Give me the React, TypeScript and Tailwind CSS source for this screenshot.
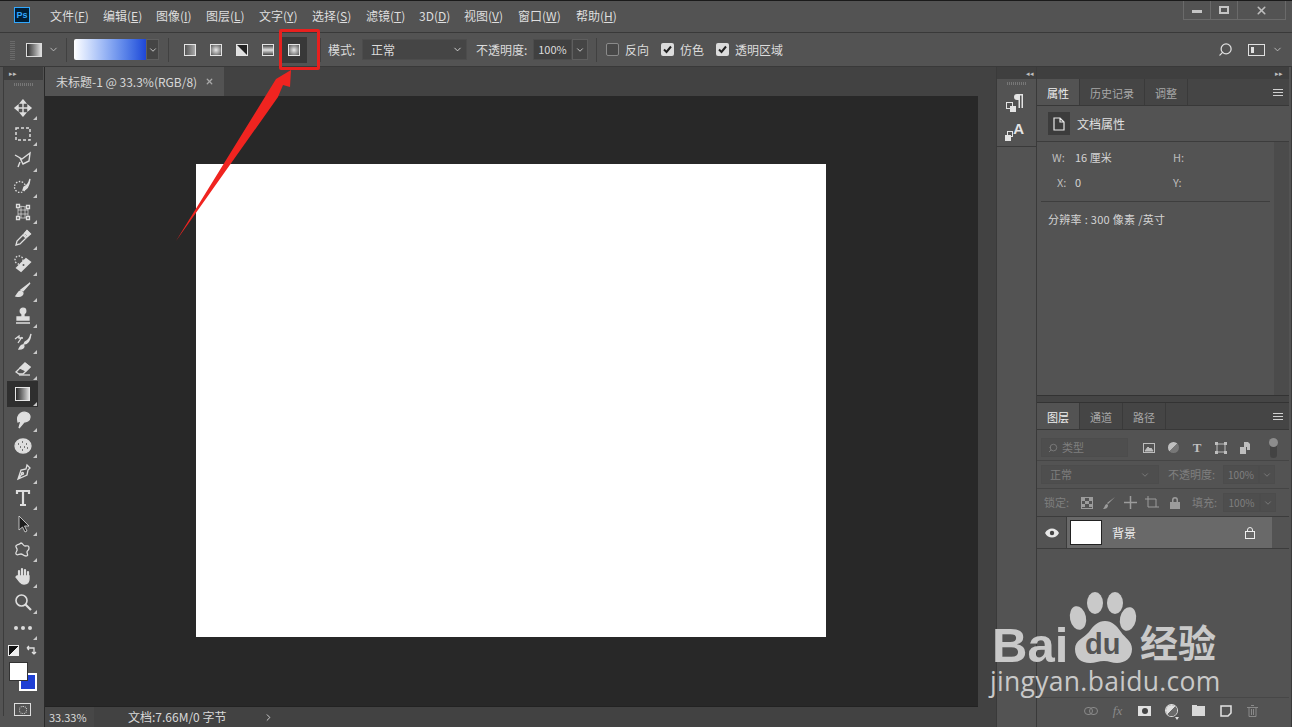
import type { ReactNode } from "react";
import { ChevronDown, ChevronRight, Search, X } from "lucide-react";

const CJK = "font-['Noto_Sans_CJK_SC','Liberation_Sans',sans-serif]";

const MENUS: { name: string; key: string; width: string }[] = [
  { name: "文件", key: "F", width: "w-[53px]" },
  { name: "编辑", key: "E", width: "w-[53px]" },
  { name: "图像", key: "I", width: "w-[50px]" },
  { name: "图层", key: "L", width: "w-[53px]" },
  { name: "文字", key: "Y", width: "w-[53px]" },
  { name: "选择", key: "S", width: "w-[54px]" },
  { name: "滤镜", key: "T", width: "w-[53px]" },
  { name: "3D", key: "D", width: "w-[45px]" },
  { name: "视图", key: "V", width: "w-[54px]" },
  { name: "窗口", key: "W", width: "w-[58px]" },
  { name: "帮助", key: "H", width: "w-[60px]" },
];

/** One of the five gradient shapes in the options bar. */
function GradientShape({ fill, selected }: { fill: string; selected?: boolean }): ReactNode {
  return (
    <div className={`flex h-[26px] w-[26px] items-center justify-center ${selected ? "bg-[#383838]" : ""}`}>
      <div className={`h-[12px] w-[12px] border border-[#e4e4e4] ${fill}`} />
    </div>
  );
}

function Svg({ children }: { children: ReactNode }): ReactNode {
  return (
    <svg width="20" height="20" viewBox="0 0 20 20" fill="none" stroke="#dedede" strokeWidth="1.3">
      {children}
    </svg>
  );
}

const TOOLS: { icon: ReactNode; active?: boolean }[] = [
  { icon: <Svg><path d="M10 2v16M2 10h16M10 2 7.500 5h5zM10 18l-2.500-3h5zM2 10l3-2.500v5zM18 10l-3-2.500v5z" fill="#dedede" strokeWidth="1.400" /></Svg> },
  { icon: <Svg><rect x="3" y="4" width="14" height="12" strokeDasharray="3 2" strokeWidth="1.500" /></Svg> },
  { icon: <Svg><path d="M2 5l7 4 8-6-1 8-6 3-3-6M7 12l-2 5" strokeWidth="1.400" /></Svg> },
  { icon: <Svg><circle cx="7" cy="11" r="5.500" strokeDasharray="1.500 1.500" /><path d="M17 3c-1 4-3 7-6 8l-1 3c3 0 6-3 7-11z" fill="#dedede" /></Svg> },
  { icon: <Svg><path d="M5 4 15 5 15 16H5zM8 4v12M12 5v11M5 8h10M5 12h10" strokeWidth="0.700" /><path d="M3.500 2.500h3v3h-3zM13.500 3.500h3v3h-3zM3.500 14.500h3v3h-3zM13.500 14.500h3v3h-3z" fill="#555" /></Svg> },
  { icon: <Svg><path d="M3 17l1-4 6-6 3 3-6 6zM11 6l3-3 3 3-3 3z" fill="none" /><path d="M12 5l2-2.500 3.500 3.500-2.500 2z" fill="#dedede" /></Svg> },
  { icon: <Svg><circle cx="6" cy="6" r="4" strokeDasharray="1.500 1.500" /><path d="M4 14l9-9 4 3-9 9z" fill="#dedede" strokeWidth="2" /><circle cx="10.500" cy="11" r="1" fill="#555" stroke="none" /></Svg> },
  { icon: <Svg><path d="M17 3 10 11l-2-1z" fill="#dedede" /><path d="M8 11c-3 0-3 3-5 5 4 1 7 0 7-3z" fill="#dedede" /></Svg> },
  { icon: <Svg><circle cx="10" cy="5" r="2.800" fill="#dedede" /><path d="M9 7h2v4H9zM4 11h12v3H4z" fill="#dedede" /><path d="M3 17h14" strokeWidth="1.500" /></Svg> },
  { icon: <Svg><path d="M2 7l4-3v2h4M5 11l4-6" /><path d="M18 2c-1 4-3 7-6 8l-1 2c3 0 6-3 7-10zM10 13c-2 0-3 2-4 4 3 0 5-1 5-3z" fill="#dedede" /></Svg> },
  { icon: <Svg><path d="M3 14l9-9 5 4-7 7H6z" /><path d="M7 10l5-5 5 4-4 4z" fill="#dedede" /><path d="M6 17h11" /></Svg> },
  { icon: <div className="h-[14px] w-[15px] border border-[#e6e6e6] bg-gradient-to-r from-[#2a2a2a] to-[#dedede]" />, active: true },
  { icon: <Svg><path d="M8 3c4-2 9 0 9 4s-4 5-6 5l-5 6 2-7-3 1c-1-4 0-7 3-9z" fill="#dedede" /></Svg> },
  { icon: <Svg><ellipse cx="10" cy="10" rx="8" ry="7" fill="#dedede" /><path d="M5 8h1M9 6h1M13 8h1M7 11h1M11 11h1M14 12h1M9 14h1" stroke="#555" /></Svg> },
  { icon: <Svg><path d="M14 3l3 3-2 2-1 5-9 4 3-9 5-1zM5 17l4-5" /><circle cx="9.500" cy="11.500" r="1" /></Svg> },
  { icon: <Svg><path d="M4 6V3h12v3M10 3v14M7 17h6" strokeWidth="2.200" /></Svg> },
  { icon: <svg width="20" height="20" viewBox="0 0 20 20"><path d="M6 2v14l3.500-3 2.500 5 2-1-2.500-5H16z" fill="#1d1d1d" stroke="#dedede" strokeWidth="0.800" /></svg> },
  { icon: <Svg><path d="M8 3c2 0 2 3 4 3s4-1 4 2-2 2-2 4 2 4-1 4-3-2-5-2-4 2-5 0 2-3 1-5-2-3 0-4 2 0 4-2z" /></Svg> },
  { icon: <Svg><path d="M6 11V5M9 10V3M12 10V4M15 11V6" strokeWidth="2.200" strokeLinecap="round" /><path d="M5 10h11v3c0 3-2 5-5 5-2 0-3-1-4-2l-4-5 1-1 2 1z" fill="#dedede" /></Svg> },
  { icon: <Svg><circle cx="8.500" cy="8.500" r="5.500" strokeWidth="1.600" /><path d="M12.500 12.500 18 18" strokeWidth="2.200" /></Svg> },
  { icon: <div className="flex gap-[3px]"><div className="h-[4px] w-[4px] rounded-full bg-[#dcdcdc]" /><div className="h-[4px] w-[4px] rounded-full bg-[#dcdcdc]" /><div className="h-[4px] w-[4px] rounded-full bg-[#dcdcdc]" /></div> },
];

/** A tool button with its small flyout mark in the corner. */
function ToolButton({ icon, active }: { icon: ReactNode; active?: boolean }): ReactNode {
  return (
    <div className={`relative flex h-[26px] w-[31px] items-center justify-center ${active ? "bg-[#2f2f2f]" : ""}`}>
      {icon}
      <div className="absolute right-[1px] bottom-[1px] h-0 w-0 border-b-[4px] border-l-[4px] border-b-[#c8c8c8] border-l-transparent" />
    </div>
  );
}

function Tab({ label, active }: { label: string; active?: boolean }): ReactNode {
  return (
    <div
      className={`flex h-full items-center border-r border-[#3a3a3a] px-[10px] pt-[2px] text-[11px] ${
        active ? "bg-[#535353] text-[#f0f0f0]" : "bg-[#454545] text-[#a8a8a8]"
      }`}
    >
      {label}
    </div>
  );
}

function PanelMenu(): ReactNode {
  return (
    <div className="mr-[6px] ml-auto flex w-[10px] flex-col gap-[2px]">
      <div className="h-px bg-[#d0d0d0]" />
      <div className="h-px bg-[#d0d0d0]" />
      <div className="h-px bg-[#d0d0d0]" />
    </div>
  );
}

function Checkbox({ checked }: { checked?: boolean }): ReactNode {
  return checked ? (
    <svg width="13" height="13" viewBox="0 0 13 13" className="shrink-0">
      <rect width="13" height="13" rx="2" fill="#dcdcdc" />
      <path d="M3 6.500 5.500 9 10 3.500" fill="none" stroke="#222" strokeWidth="2" />
    </svg>
  ) : (
    <div className="h-[13px] w-[13px] shrink-0 rounded-[2px] border border-[#8a8a8a] bg-[#484848]" />
  );
}

function Grip({ className }: { className: string }): ReactNode {
  return <div className={`bg-[repeating-linear-gradient(90deg,#777_0,#777_1px,transparent_1px,transparent_2px)] ${className}`} />;
}

/** Fixed-width slot so the icon rows keep an even pitch. */
function Slot({ width, children }: { width: string; children: ReactNode }): ReactNode {
  return <div className={`flex items-center justify-center ${width}`}>{children}</div>;
}

/** The properties panel: tabs, header row and document values. */
function PropertiesPanel(): ReactNode {
  return (
    <div className="flex h-[316px] shrink-0 flex-col">
      <div className="flex h-[27px] shrink-0 items-center border-b border-[#383838] bg-[#454545]">
        <Tab label="属性" active />
        <Tab label="历史记录" />
        <Tab label="调整" />
        <PanelMenu />
      </div>
      <div className="flex h-[36px] shrink-0 items-center gap-[7px] border-b border-[#3c3c3c] pl-[11px] text-[12px] text-[#e0e0e0]">
        <div className="flex h-[23px] w-[22px] items-center justify-center bg-[#3c3c3c]">
          <svg width="12" height="14" viewBox="0 0 12 14" fill="none" stroke="#e8e8e8" strokeWidth="1.200">
            <path d="M1 1h6l4 4v8H1zM7 1v4h4" />
          </svg>
        </div>
        文档属性
      </div>
      <div className="flex min-h-0 flex-1">
        <div className="flex-1 text-[11px] text-[#d4d4d4]">
          <div className="mt-[7px] flex h-[16px] items-center">
            <span className="w-[38px] pl-[15px] text-[#bdbdbd]">W:</span>
            <span className="w-[98px]">16 厘米</span>
            <span className="text-[#bdbdbd]">H:</span>
          </div>
          <div className="mt-[9px] flex h-[16px] items-center">
            <span className="w-[38px] pl-[20px] text-[#bdbdbd]">X:</span>
            <span className="w-[98px]">0</span>
            <span className="text-[#bdbdbd]">Y:</span>
          </div>
          <div className="mx-[4px] mt-[11px] h-px bg-[#3e3e3e]" />
          <div className="mt-[9px] pl-[11px] text-[11px] tracking-[0.300px]">分辨率 : 300 像素 /英寸</div>
        </div>
        <div className="w-[15px] bg-[#4b4b4b]" />
      </div>
    </div>
  );
}

/** The layers panel, greyed controls and the single background layer. */
function LayersPanel(): ReactNode {
  const dim = "text-[#7f7f7f]";
  const field = "flex items-center border border-[#4c4c4c] bg-[#4e4e4e]";
  return (
    <div className="flex min-h-0 flex-1 flex-col pb-[4px]">
      <div className="flex h-[27px] shrink-0 items-center border-b border-[#383838] bg-[#454545]">
        <Tab label="图层" active />
        <Tab label="通道" />
        <Tab label="路径" />
        <PanelMenu />
      </div>
      <div className="flex h-[31px] shrink-0 items-center border-b border-[#454545] pt-[5px] pl-[4px]">
        <div className={`${field} h-[19px] w-[87px] gap-[4px] pl-[6px] text-[11px] ${dim}`}>
          <Search size={10} strokeWidth={2} className="-scale-x-100" />
          类型
        </div>
        <div className="ml-[9px] flex items-center">
          <Slot width="w-[24px]">
            <svg width="12" height="10" viewBox="0 0 12 10" fill="none" stroke="#bdbdbd"><rect x="0.500" y="0.500" width="11" height="9" /><path d="M2 8l3-4 2 2 1-1 2 3z" fill="#bdbdbd" /></svg>
          </Slot>
          <Slot width="w-[24px]">
            <div className="h-[11px] w-[11px] rounded-full bg-[linear-gradient(135deg,#c0c0c0_50%,#777_50%)]" />
          </Slot>
          <Slot width="w-[24px]">
            <span className="font-['Liberation_Serif',serif] text-[13px] leading-none font-bold text-[#c0c0c0]">T</span>
          </Slot>
          <Slot width="w-[24px]">
            <svg width="12" height="12" viewBox="0 0 12 12" fill="none" stroke="#bdbdbd"><path d="M2 2h8v8H2z" /><path d="M0 0h3v3H0zM9 0h3v3H9zM0 9h3v3H0zM9 9h3v3H9z" fill="#bdbdbd" stroke="none" /></svg>
          </Slot>
          <Slot width="w-[24px]">
            <svg width="10" height="12" viewBox="0 0 10 12" fill="#bdbdbd"><path d="M4 0h4l2 2v6H7V5H4zM0 5h6v7H0z" /></svg>
          </Slot>
        </div>
        <div className="ml-[13px] flex h-[20px] w-[7px] flex-col items-center rounded-full bg-[#434343]">
          <div className="h-[9px] w-[9px] shrink-0 rounded-full bg-[#8c8c8c]" />
        </div>
      </div>
      <div className="flex h-[28px] shrink-0 items-center border-b border-[#454545] pl-[4px] text-[11px]">
        <div className={`${field} h-[19px] w-[118px] justify-between px-[8px] ${dim}`}>
          正常
          <ChevronDown size={10} />
        </div>
        <span className={`ml-[9px] w-[55px] ${dim}`}>不透明度:</span>
        <div className={`${field} h-[19px] w-[36px] justify-center text-[10px] ${dim}`}>100%</div>
        <div className={`${field} h-[19px] w-[16px] justify-center ${dim}`}><ChevronDown size={10} /></div>
      </div>
      <div className="flex h-[28px] shrink-0 items-center border-b border-[#3c3c3c] pl-[7px] text-[11px]">
        <span className={`w-[37px] ${dim}`}>锁定:</span>
        <div className="grid h-[12px] w-[12px] grid-cols-3 grid-rows-3 border border-[#9c9c9c]">
          <div className="bg-[#9c9c9c]" /><div /><div className="bg-[#9c9c9c]" />
          <div /><div className="bg-[#9c9c9c]" /><div />
          <div className="bg-[#9c9c9c]" /><div /><div className="bg-[#9c9c9c]" />
        </div>
        <svg width="14" height="14" viewBox="0 0 14 14" fill="#9c9c9c" className="ml-[9px]"><path d="M13 1 6 8l-1-1zM5 8c-2 0-2 3-4 5 3 0 5-1 5-4z" /></svg>
        <svg width="13" height="13" viewBox="0 0 13 13" fill="none" stroke="#9c9c9c" className="ml-[8px]"><path d="M6.500 0v13M0 6.500h13" strokeWidth="1.500" /></svg>
        <svg width="14" height="13" viewBox="0 0 14 13" fill="none" stroke="#9c9c9c" className="ml-[8px]"><path d="M3 0v11h11M0 3h11v8" /></svg>
        <svg width="10" height="12" viewBox="0 0 10 12" fill="#9c9c9c" className="ml-[11px]"><path d="M2 5V3a3 3 0 0 1 6 0v2h2v7H0V5zM3.500 5h3V3a1.500 1.500 0 0 0-3 0z" /></svg>
        <span className={`ml-[12px] w-[31px] shrink-0 ${dim}`}>填充:</span>
        <div className={`${field} h-[19px] w-[37px] justify-center text-[10px] ${dim}`}>100%</div>
        <div className={`${field} h-[19px] w-[16px] justify-center ${dim}`}><ChevronDown size={10} /></div>
      </div>
      <div className="flex h-[32px] shrink-0 items-center border-b border-[#3c3c3c]">
        <div className="flex h-full w-[30px] items-center justify-center border-r border-[#3c3c3c]">
          <svg width="14" height="10" viewBox="0 0 14 10"><path d="M0 5c3-6 11-6 14 0-3 6-11 6-14 0z" fill="#e8e8e8" /><circle cx="7" cy="5" r="2.200" fill="#444" /></svg>
        </div>
        <div className="flex h-full w-[205px] items-center bg-[#696969] pl-[3px] text-[12px] text-[#f0f0f0]">
          <div className="h-[25px] w-[32px] border border-[#222] bg-white" />
          <span className="ml-[10px]">背景</span>
          <svg width="10" height="12" viewBox="0 0 10 12" fill="none" stroke="#eee" className="mr-[17px] ml-auto"><rect x="0.500" y="4.500" width="9" height="7" /><path d="M2.500 4.500V3a2.500 2.500 0 0 1 5 0v1.500" /></svg>
        </div>
      </div>
      <div className="flex-1" />
      <div className="flex h-[26px] shrink-0 items-center justify-end border-t border-[#474747] pr-[23px]">
        <Slot width="w-[27px]">
          <svg width="14" height="8" viewBox="0 0 14 8" fill="none" stroke="#8a8a8a"><rect x="0.500" y="0.500" width="8" height="7" rx="3.500" /><rect x="5.500" y="0.500" width="8" height="7" rx="3.500" /></svg>
        </Slot>
        <Slot width="w-[27px]">
          <span className="font-['Liberation_Serif',serif] text-[13px] text-[#8a8a8a] italic">fx</span>
        </Slot>
        <Slot width="w-[27px]">
          <div className="flex h-[10px] w-[13px] items-center justify-center bg-[#e0e0e0]"><div className="h-[6px] w-[6px] rounded-full bg-[#444]" /></div>
        </Slot>
        <Slot width="w-[27px]">
          <div className="relative h-[11px] w-[11px] rounded-full bg-[linear-gradient(135deg,#e0e0e0_50%,#6a6a6a_50%)] ring-1 ring-[#e0e0e0]">
            <div className="absolute top-[12px] left-[9px] h-0 w-0 border-x-[2px] border-t-[3px] border-x-transparent border-t-[#e0e0e0]" />
          </div>
        </Slot>
        <Slot width="w-[27px]">
          <svg width="13" height="11" viewBox="0 0 13 11" fill="#d8d8d8"><path d="M0 0h5v1h8v10H0z" /></svg>
        </Slot>
        <Slot width="w-[27px]">
          <svg width="12" height="12" viewBox="0 0 12 12" fill="none" stroke="#e4e4e4" strokeWidth="1.500"><path d="M1 1h10v7l-3 3H1z" /></svg>
        </Slot>
        <Slot width="w-[27px]">
          <svg width="11" height="12" viewBox="0 0 11 12" fill="none" stroke="#8a8a8a"><path d="M0 2.500h11M2 2.500v9h7v-9M4 .5h3M4.500 4v6M6.500 4v6" /></svg>
        </Slot>
      </div>
    </div>
  );
}

export default function App(): ReactNode {
  return (
    <div className={`relative flex h-[727px] w-[1292px] flex-col overflow-hidden border-t border-[#1a1a1a] bg-[#535353] text-[#dcdcdc] ${CJK}`}>
      {/* menu bar */}
      <div className="flex h-[32px] shrink-0 items-start border-b border-[#393939] pl-[14px]">
        <div className="mt-[6px] flex h-[16px] w-[16px] items-center justify-center border border-[#31a8ff] bg-[#001e36] font-['Liberation_Sans',sans-serif] text-[9px] leading-none font-bold text-[#31a8ff]">
          Ps
        </div>
        <div className="mt-[6px] ml-[20px] flex text-[12px] leading-[18px] text-[#dedede]">
          {MENUS.map((menu) => (
            <span key={menu.key} className={menu.width}>
              {menu.name}(<span className="underline">{menu.key}</span>)
            </span>
          ))}
        </div>
        <div className="ml-auto mr-[6px] flex h-[19px] w-[103px] border border-t-0 border-[#6a6a6a] text-[#bdbdbd]">
          <div className="flex w-[27px] items-center justify-center border-r border-[#6a6a6a]"><div className="mt-[3px] h-[3px] w-[10px] bg-[#c4c4c4]" /></div>
          <div className="flex w-[27px] items-center justify-center border-r border-[#6a6a6a]"><div className="h-[8px] w-[10px] border-2 border-[#c4c4c4]" /></div>
          <div className="flex flex-1 items-center justify-center"><X size={13} strokeWidth={3} /></div>
        </div>
      </div>

      {/* options bar */}
      <div className="flex h-[34px] shrink-0 items-center border-b border-[#393939] text-[12px]">
        <div className="ml-[10px] h-[20px] w-[5px] bg-[repeating-linear-gradient(0deg,#6a6a6a_0,#6a6a6a_1px,transparent_1px,transparent_2px)]" />
        <div className="ml-[11px] h-[14px] w-[16px] border border-[#dcdcdc] bg-gradient-to-r from-[#333] to-[#e0e0e0]" />
        <ChevronDown size={11} className="ml-[6px] text-[#c0c0c0]" />
        <div className="ml-[7px] h-[24px] w-px bg-[#414141]" />
        <div className="ml-[7px] h-[21px] w-[72px] rounded-l-[2px] bg-gradient-to-r from-white to-[#1f46d8]" />
        <div className="flex h-[21px] w-[13px] items-center justify-center border border-[#5e5e5e] bg-[#454545]"><ChevronDown size={10} /></div>
        <div className="ml-[9px] h-[24px] w-px bg-[#414141]" />
        <div className="ml-[8px] flex">
          <GradientShape fill="bg-gradient-to-r from-[#555] to-[#aaa]" />
          <GradientShape fill="bg-[radial-gradient(circle,#e8e8e8,#555)]" />
          <GradientShape fill="bg-[linear-gradient(45deg,#e0e0e0_48%,#222_52%)]" />
          <GradientShape fill="bg-[linear-gradient(180deg,#444,#e0e0e0,#444)]" />
          <GradientShape fill="bg-[radial-gradient(circle,#e8e8e8,#555)]" selected />
        </div>
        <div className="ml-[13px] h-[24px] w-px bg-[#414141]" />
        <span className="ml-[7px] w-[34px]">模式:</span>
        <div className="flex h-[21px] w-[105px] items-center justify-between border border-[#4c4c4c] bg-[#454545] pr-[3px] pl-[8px]">
          正常
          <ChevronDown size={11} />
        </div>
        <span className="ml-[9px] w-[57px]">不透明度:</span>
        <div className="flex h-[21px] w-[39px] items-center justify-center border border-[#4c4c4c] bg-[#404040] text-[11px]">100%</div>
        <div className="flex h-[21px] w-[16px] items-center justify-center border border-[#5e5e5e] bg-[#454545]"><ChevronDown size={10} /></div>
        <div className="ml-[8px] h-[24px] w-px bg-[#414141]" />
        <div className="ml-[9px]"><Checkbox /></div>
        <span className="ml-[6px] w-[36px]">反向</span>
        <Checkbox checked />
        <span className="ml-[6px] w-[36px]">仿色</span>
        <Checkbox checked />
        <span className="ml-[6px]">透明区域</span>
        <Search size={15} strokeWidth={2} className="mr-[15px] ml-auto -scale-x-100 text-[#e0e0e0]" />
        <div className="flex h-[12px] w-[17px] items-center border border-[#e0e0e0] pl-[2px]"><div className="h-[6px] w-[3px] bg-[#e0e0e0]" /></div>
        <ChevronDown size={11} className="mr-[9px] ml-[7px] text-[#c0c0c0]" />
      </div>

      <div className="flex min-h-0 flex-1">
        {/* tools */}
        <div className="flex w-[45px] shrink-0 flex-col items-end border-r border-[#2a2a2a] pr-[1px]">
          <div className="flex w-[40px] flex-col items-center border-l border-[#3c3c3c]">
            <div className="h-[13px] w-full bg-[#3f3f3f] pl-[5px] text-[7px] leading-[13px] text-[#c0c0c0]">▸▸</div>
            <Grip className="mt-[3px] h-[3px] w-[20px]" />
            <div className="mt-[9px] mr-[2px] flex flex-col">
              {TOOLS.map((tool, index) => (
                <ToolButton key={index} icon={tool.icon} active={tool.active} />
              ))}
            </div>
            <div className="mt-[4px] mr-[2px] flex w-[28px] items-center justify-between">
              <div className="h-[9px] w-[9px] bg-[linear-gradient(135deg,#111_50%,#eee_50%)] outline outline-[#eee]" />
              <svg width="11" height="11" viewBox="0 0 11 11" fill="none" stroke="#e0e0e0" strokeWidth="1.300"><path d="M1 3h7v6M1 3l2-2M1 3l2 2M8 9 6 7M8 9l2-2" /></svg>
            </div>
            <div className="relative mt-[6px] mr-[2px] h-[29px] w-[28px]">
              <div className="absolute right-0 bottom-0 h-[18px] w-[18px] border-2 border-white bg-[#1f3fd4]" />
              <div className="absolute top-0 left-0 h-[19px] w-[19px] border border-[#333] bg-white" />
            </div>
            <div className="mt-[12px] mr-[2px] flex h-[13px] w-[17px] items-center justify-center border border-[#dedede]">
              <div className="h-[8px] w-[8px] rounded-full border border-dotted border-[#dedede]" />
            </div>
          </div>
        </div>

        {/* document */}
        <div className="flex min-w-0 flex-1 flex-col">
          <div className="flex h-[29px] shrink-0 bg-[#424242]">
            <div className="flex w-[179px] items-center bg-[#535353] pl-[11px] text-[12px] text-[#d8d8d8]">
              未标题-1 @ 33.3%(RGB/8)
              <X size={9} strokeWidth={3.500} className="ml-[8px] text-[#a8a8a8]" />
            </div>
          </div>
          <div className="flex min-h-0 flex-1">
            <div className="flex min-w-0 flex-1 flex-col">
              <div className="flex flex-1 items-center justify-center bg-[#282828]">
                <div className="mr-[1px] mb-[1px] h-[473px] w-[630px] bg-white" />
              </div>
              <div className="h-px bg-[#222]" />
            </div>
            <div className="w-[18px] bg-[#424242]" />
          </div>
          <div className="flex h-[20px] shrink-0 items-center bg-[#424242] text-[11px] text-[#d8d8d8]">
            <div className="flex h-full w-[49px] items-center bg-[#474747] pl-[4px]">33.33%</div>
            <div className="flex h-full flex-1 items-center pl-[34px] text-[12px]">
              文档:7.66M/0 字节
              <ChevronRight size={11} className="ml-[37px]" />
            </div>
          </div>
        </div>

        {/* collapsed dock */}
        <div className="flex w-[41px] shrink-0 flex-col items-center border-x border-[#3a3a3a]">
          <div className="h-[12px] w-full bg-[#3f3f3f] pr-[2px] text-right text-[7px] leading-[12px] text-[#c0c0c0]">◂◂</div>
          <div className="flex h-[68px] w-full flex-col items-center border-b border-[#3a3a3a]">
            <Grip className="mt-[3px] h-[3px] w-[20px]" />
            <svg width="18" height="18" viewBox="0 0 18 18" className="mt-[9px] mr-[3px]">
              <path d="M8 3a3 3 0 0 1 3-3h6v14h-1.500V1.500H14V14h-1.500V6H11a3 3 0 0 1-3-3z" fill="#e4e4e4" />
              <rect x="0.500" y="8.500" width="6" height="6" fill="none" stroke="#e4e4e4" /><rect x="4" y="12" width="6" height="6" fill="#e4e4e4" />
            </svg>
            <div className="relative mt-[11px] mr-[3px] h-[18px] w-[20px]">
              <span className="absolute top-[-3px] right-[1px] font-['Liberation_Sans',sans-serif] text-[15px] leading-[18px] font-bold text-[#e4e4e4]">A</span>
              <div className="absolute bottom-0 left-0 h-[6px] w-[6px] bg-[#e4e4e4]" />
              <div className="absolute bottom-[4px] left-[2px] h-[6px] w-[6px] border border-[#e4e4e4]" />
            </div>
          </div>
        </div>

        {/* panels */}
        <div className="flex w-[255px] shrink-0 flex-col border-r border-[#3a3a3a] pr-[2px]">
          <div className="h-[12px] shrink-0 bg-[#3f3f3f] pr-[6px] text-right text-[7px] leading-[12px] text-[#c0c0c0]">▸▸</div>
          <PropertiesPanel />
          <div className="h-[8px] shrink-0 border-y border-[#333] bg-[#454545]" />
          <LayersPanel />
        </div>
      </div>

      {/* annotation */}
      <div className="absolute top-[28px] left-[279px] h-[41px] w-[41px] rounded-[2px] border-[3px] border-[#e8201e]" />
      <svg className="absolute top-0 left-0" width="1292" height="727" viewBox="0 0 1292 727">
        <path d="M176 240 276 78 291 69 290 86 283 84 278 96z" fill="#f02420" />
        {/* watermark paw */}
        <g fill="#c9c9c9">
          <ellipse cx="1078" cy="617" rx="8" ry="12" transform="rotate(-12 1078 617)" />
          <ellipse cx="1095" cy="602" rx="8" ry="11" />
          <ellipse cx="1115" cy="602" rx="8" ry="11" />
          <ellipse cx="1128" cy="618" rx="8" ry="12" transform="rotate(12 1128 618)" />
          <path d="M1075 648c0-9 9-11 14-17 5-7 9-11 16-11s11 4 16 11c4 6 11 9 11 17 0 9-7 14-15 14-5 0-8-2-13-2s-9 2-14 2c-9 0-15-5-15-14z" />
        </g>
      </svg>
      <div className="absolute top-[624px] left-[992px] font-['Liberation_Sans',sans-serif] text-[49px] leading-[40px] font-bold text-[#c9c9c9]">Bai</div>
      <div className="absolute top-[628px] left-[1085px] font-['Liberation_Sans',sans-serif] text-[29px] leading-[30px] font-bold text-[#555]">du</div>
      <div className="absolute top-[621px] left-[1140px] text-[38px] leading-[38px] font-bold text-[#c9c9c9]">经验</div>
      <div className="absolute top-[665px] left-[990px] font-['Open_Sans',sans-serif] text-[26.500px] leading-[30px] tracking-[0.300px] text-[#c9c9c9]">jingyan.baidu.com</div>
    </div>
  );
}
